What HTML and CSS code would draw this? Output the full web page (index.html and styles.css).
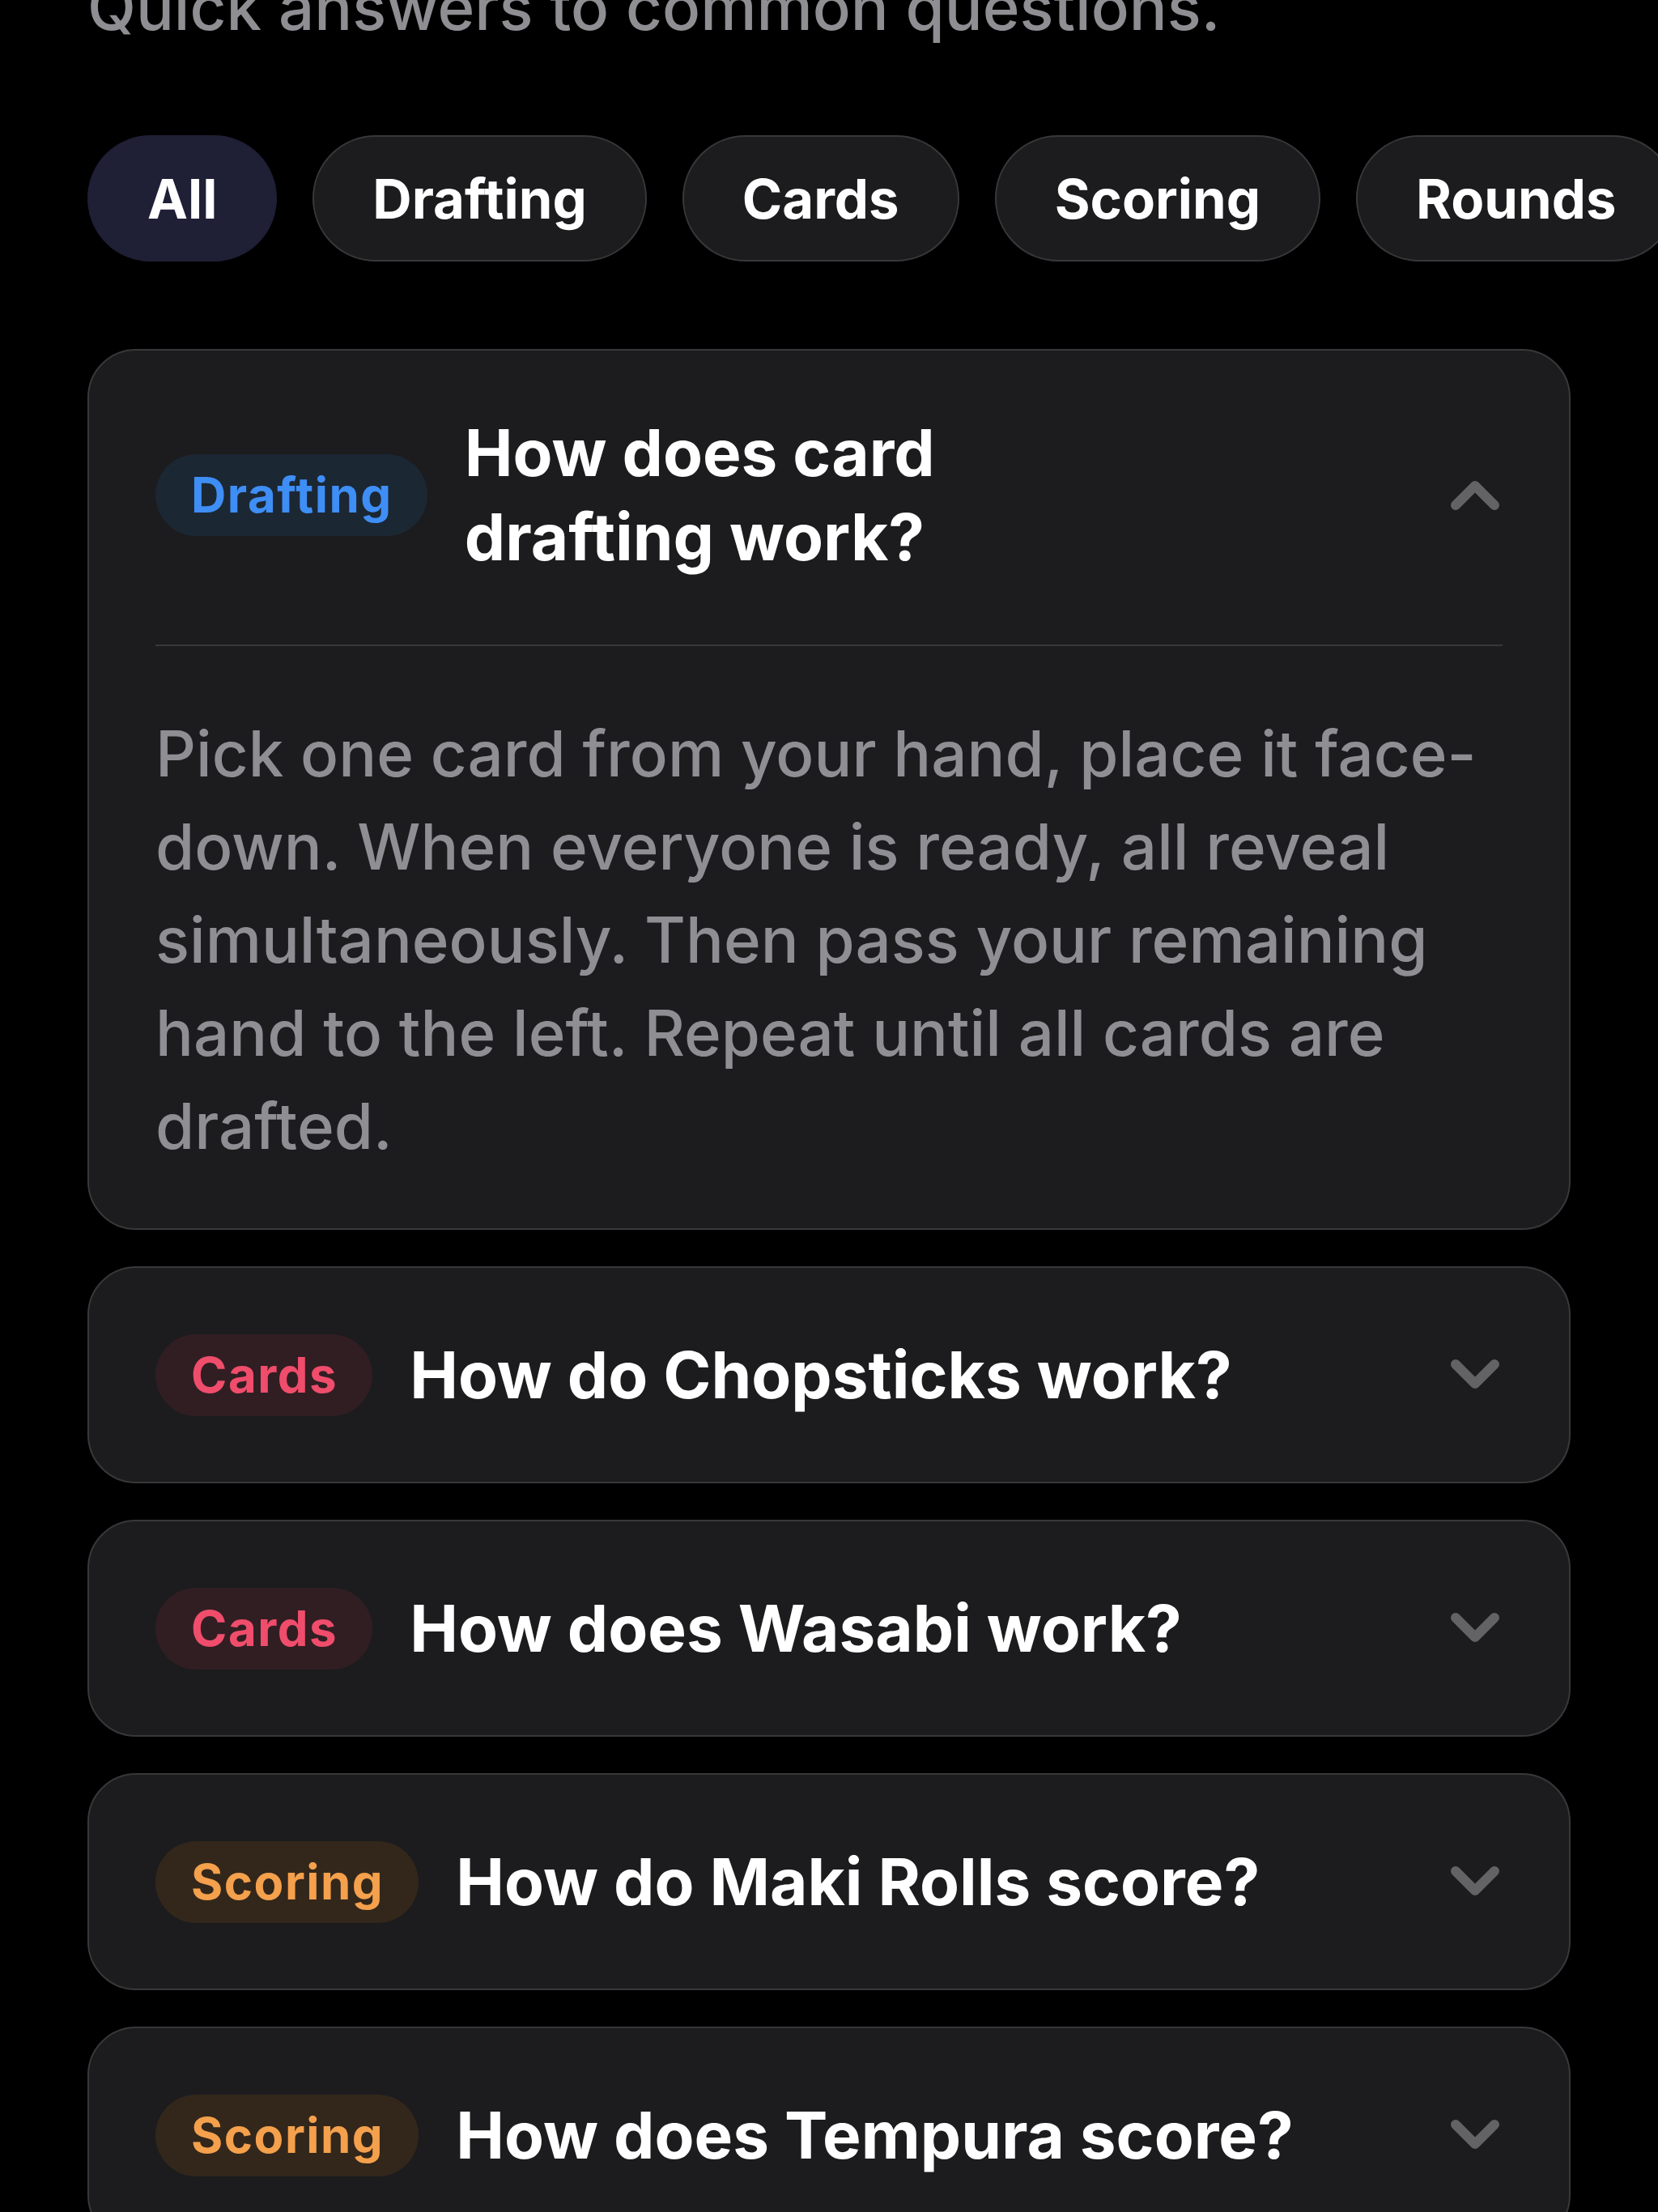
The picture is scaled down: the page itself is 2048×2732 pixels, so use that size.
FILE: index.html
```html
<!DOCTYPE html>
<html lang="en">
<head>
<meta charset="utf-8">
<title>FAQ</title>
<link rel="stylesheet" href="styles.css">
</head>
<body>
<main class="faq">
  <p class="subtitle">Quick answers to common questions.</p>
  <nav class="filters">
    <button class="chip chip--active">All</button>
    <button class="chip">Drafting</button>
    <button class="chip">Cards</button>
    <button class="chip">Scoring</button>
    <button class="chip">Rounds</button>
  </nav>
  <section class="list">
    <article class="item item--open">
      <header class="item__head">
        <span class="tag tag--drafting">Drafting</span>
        <h3 class="item__q">How does card<br>drafting work?</h3>
        <svg class="chev" viewBox="0 0 60 38" aria-hidden="true"><path d="M6 32 L30 8 L54 32"/></svg>
      </header>
      <div class="item__body">
        <p>Pick one card from your hand, place it face-down. When everyone is ready, all reveal simultaneously. Then pass your remaining hand to the left. Repeat until all cards are drafted.</p>
      </div>
    </article>
    <article class="item">
      <header class="item__head">
        <span class="tag tag--cards">Cards</span>
        <h3 class="item__q">How do Chopsticks work?</h3>
        <svg class="chev" viewBox="0 0 60 38" aria-hidden="true"><path d="M6 6 L30 30 L54 6"/></svg>
      </header>
    </article>
    <article class="item">
      <header class="item__head">
        <span class="tag tag--cards">Cards</span>
        <h3 class="item__q">How does Wasabi work?</h3>
        <svg class="chev" viewBox="0 0 60 38" aria-hidden="true"><path d="M6 6 L30 30 L54 6"/></svg>
      </header>
    </article>
    <article class="item">
      <header class="item__head">
        <span class="tag tag--scoring">Scoring</span>
        <h3 class="item__q">How do Maki Rolls score?</h3>
        <svg class="chev" viewBox="0 0 60 38" aria-hidden="true"><path d="M6 6 L30 30 L54 6"/></svg>
      </header>
    </article>
    <article class="item">
      <header class="item__head">
        <span class="tag tag--scoring">Scoring</span>
        <h3 class="item__q">How does Tempura score?</h3>
        <svg class="chev" viewBox="0 0 60 38" aria-hidden="true"><path d="M6 6 L30 30 L54 6"/></svg>
      </header>
    </article>
  </section>
</main>
</body>
</html>
```

FILE: styles.css
```css
* { box-sizing: border-box; }

html, body {
  margin: 0;
  background: #000;
}

body {
  font-family: Inter, "Noto Sans", "Liberation Sans", sans-serif;
  color: #fff;
  overflow: hidden;
}

.faq {
  padding: 0 108px;
}

.subtitle {
  margin: -39px 0 0;
  font-size: 78px;
  line-height: 96px;
  font-weight: 500;
  color: #8e8e93;
  white-space: nowrap;
}

.filters {
  display: flex;
  gap: 44px;
  margin-top: 110px;
  white-space: nowrap;
}

.chip {
  flex-shrink: 0;
  height: 156px;
  padding: 0 72px;
  border-radius: 999px;
  border: 2px solid #38383a;
  background: #1c1c1e;
  color: #fff;
  font-family: inherit;
  font-size: 67px;
  font-weight: 700;
  line-height: 1;
}

.chip--active {
  background: #1f2036;
  border-color: #1f2036;
}

.list {
  display: flex;
  flex-direction: column;
  gap: 45px;
  margin-top: 108px;
}

.item {
  background: #1c1c1e;
  border: 2px solid #38383a;
  border-radius: 60px;
  padding: 0 82px;
}

.item__head {
  display: flex;
  align-items: center;
  gap: 46px;
  padding: 80px 0;
}

.item--open .item__head {
  padding-top: 74px;
  padding-bottom: 81px;
  border-bottom: 2px solid #38383a;
}

.tag {
  flex-shrink: 0;
  display: inline-flex;
  align-items: center;
  height: 101px;
  padding: 0 43px 0 44px;
  border-radius: 999px;
  font-size: 60px;
  font-weight: 700;
  letter-spacing: 1.5px;
}

.tag--drafting { color: #3e8ef5; background: #1c2734; }
.tag--cards { color: #ef4d6b; background: #311e23; }
.tag--scoring { color: #f4a04c; background: #33271b; }

.item__q {
  margin: 0;
  font-size: 80px;
  line-height: 104px;
  font-weight: 700;
  color: #fff;
}

.chev {
  flex-shrink: 0;
  width: 60px;
  height: 38px;
  margin-left: auto;
  margin-right: 4px;
  fill: none;
  stroke: #636366;
  stroke-width: 12;
  stroke-linecap: round;
  stroke-linejoin: round;
}

.item__body {
  padding: 75px 0 69px;
}

.item__body p {
  margin: 0;
  font-size: 78px;
  line-height: 115px;
  font-weight: 500;
  color: #8e8e93;
}
```
